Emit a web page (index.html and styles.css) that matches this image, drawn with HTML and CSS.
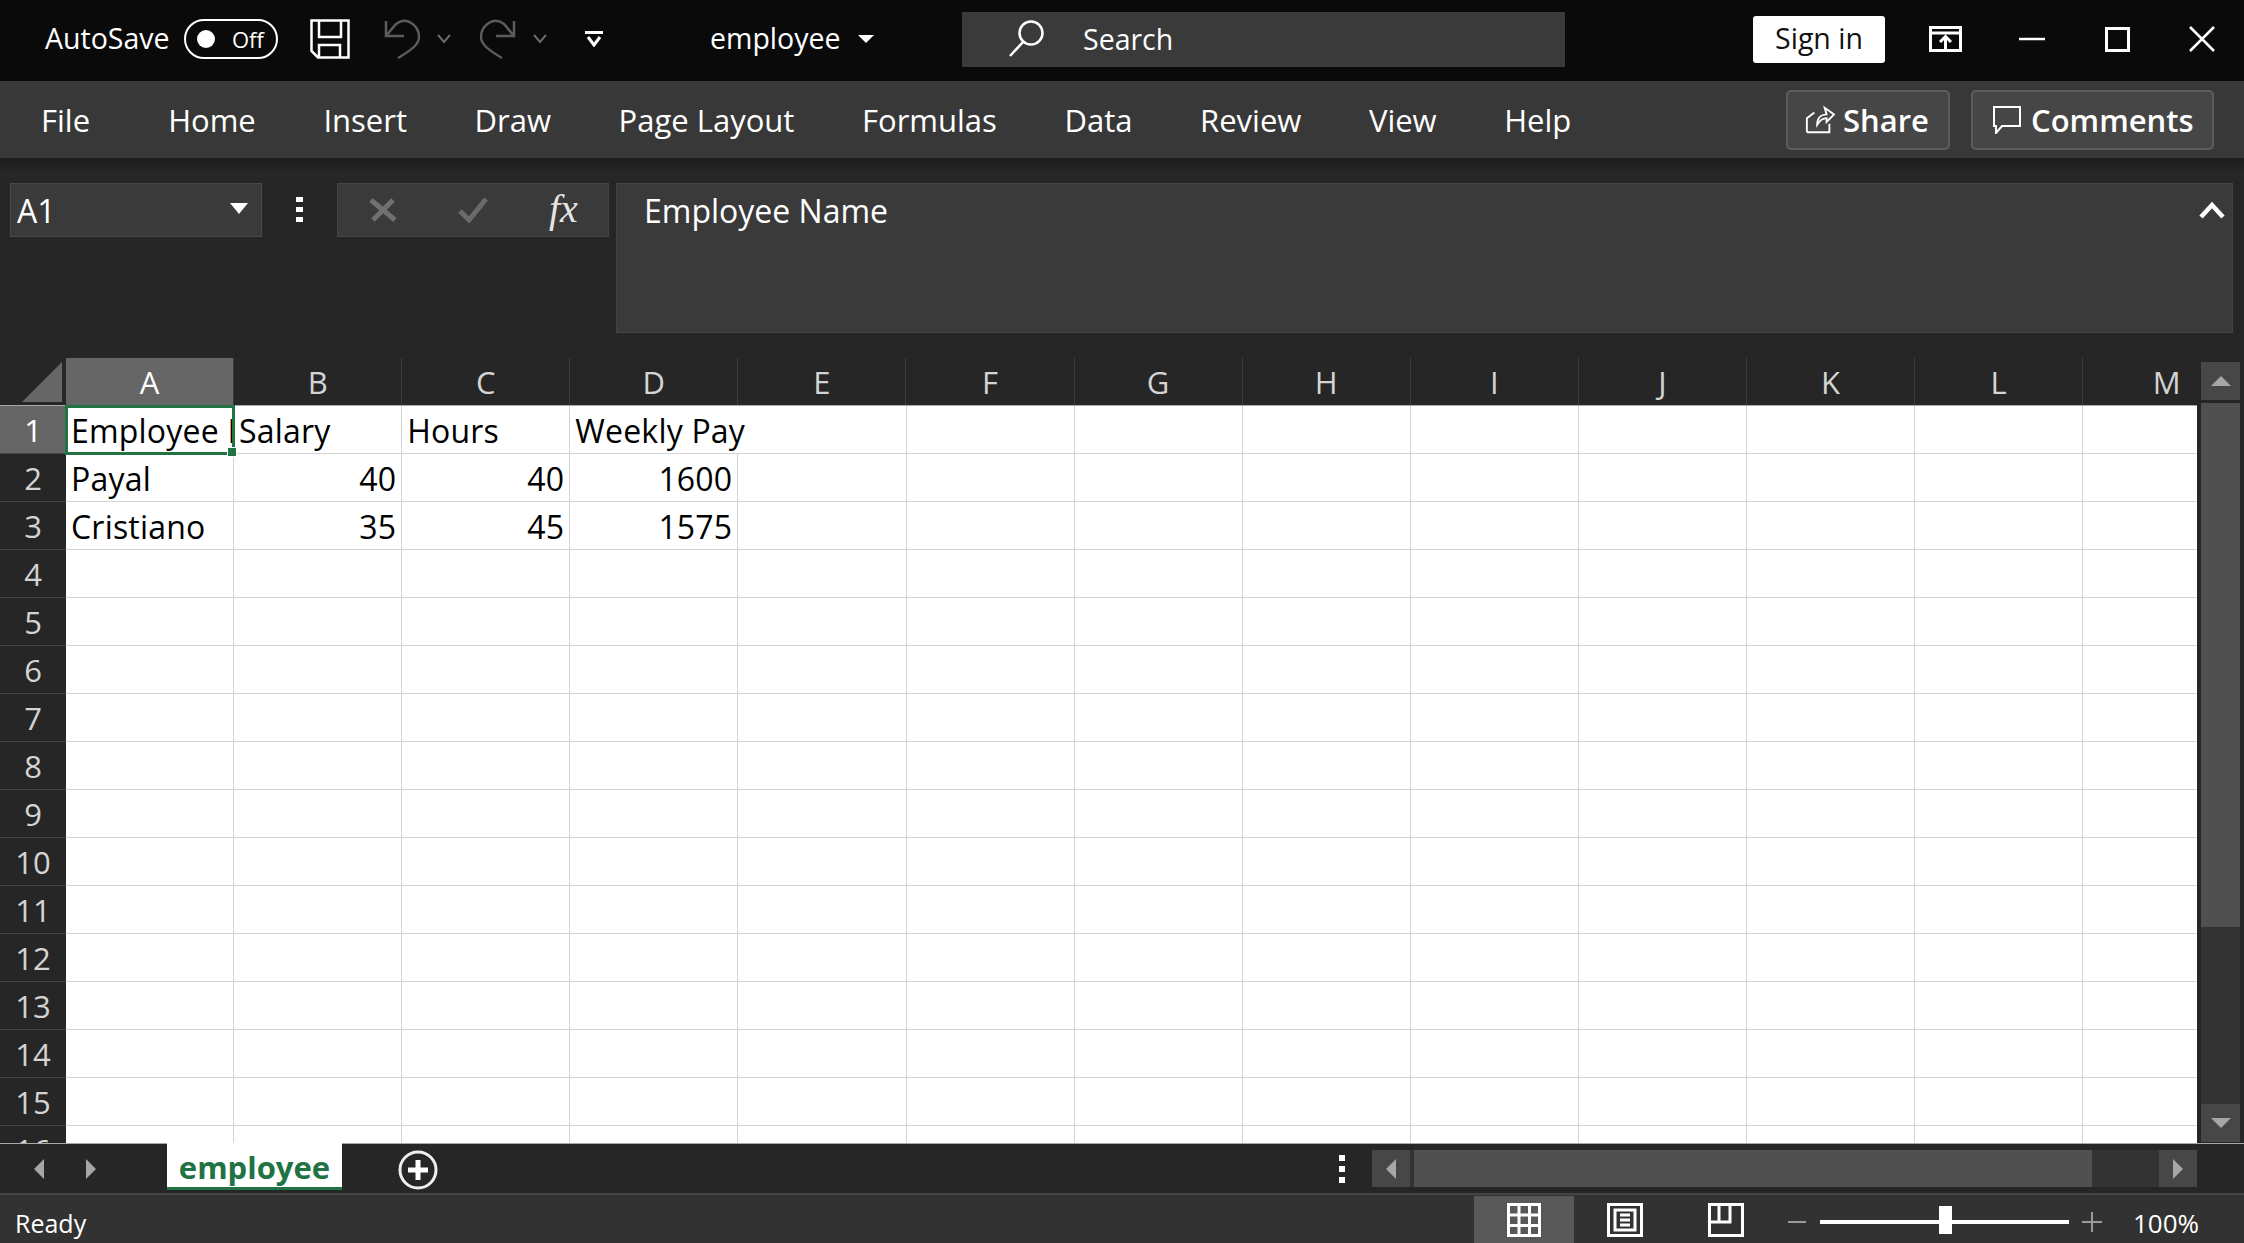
FILE: index.html
```html
<!DOCTYPE html>
<html lang="en">
<head>
  <meta charset="UTF-8" />
  <title>employee - Excel</title>
  <link rel="stylesheet" href="styles.css">
</head>
<body>

  <header class="titlebar">
    <span class="autosave">AutoSave</span>
    <span class="toggle"><i class="toggle-dot"></i><span>Off</span></span>
    <svg class="ico-save" viewBox="0 0 40 40"><path d="M1.5 1.5H38.5V38.5H8L1.5 32Z M9 1.5V18H31V1.5 M9 38.5V26H30V38.5" /></svg>
    <svg class="ico-undo" viewBox="0 0 36 40"><path d="M2 2V17H20 M2 17L12 5C22 -3 35 6 35 18C35 24 31 29 14 39" /></svg>
    <svg class="ico-chev" viewBox="0 0 14 10"><path d="M1 1L7 8L13 1" /></svg>
    <svg class="ico-redo" viewBox="0 0 36 40"><path d="M34 2V17H16 M34 17L24 5C14 -3 1 6 1 18C1 24 5 29 22 39" /></svg>
    <svg class="ico-chev" viewBox="0 0 14 10"><path d="M1 1L7 8L13 1" /></svg>
    <svg class="ico-custom" viewBox="0 0 18 16"><path d="M0 1.5H18 M3 6L9 14L15 6" /></svg>
    <span class="doc-name">employee</span>
    <i class="doc-caret"></i>
    <div class="search">
      <svg class="ico-search" viewBox="0 0 38 38"><circle cx="23" cy="13" r="11.5" /><path d="M15 22L2 36" /></svg>
      <span>Search</span>
    </div>
    <button class="signin">Sign in</button>
    <svg class="ico-restore" viewBox="0 0 33 26"><path d="M1.5 1.5H31.5V24.5H1.5Z M1.5 7H31.5 M16.5 23V11 M11 16L16.5 10.5L22 16" /></svg>
    <svg class="ico-min" viewBox="0 0 26 4"><path d="M0 2H26" /></svg>
    <svg class="ico-max" viewBox="0 0 25 25"><path d="M1.5 1.5H23.5V23.5H1.5Z" /></svg>
    <svg class="ico-close" viewBox="0 0 26 26"><path d="M1 1L25 25 M25 1L1 25" /></svg>
  </header>

  <nav class="ribbon">
    <a href="#" class="tab-file">File</a>
    <a href="#">Home</a>
    <a href="#">Insert</a>
    <a href="#">Draw</a>
    <a href="#">Page Layout</a>
    <a href="#">Formulas</a>
    <a href="#">Data</a>
    <a href="#">Review</a>
    <a href="#">View</a>
    <a href="#">Help</a>
    <button class="ribbon-btn btn-share">
      <svg viewBox="0 0 32 30"><path d="M2 28V13L10 7 M2 28H26V19 M13 20C13 12 18 9 23 9L21 2L31 9L23 17V13C19 13 16 15 13 20Z" /></svg>
      Share
    </button>
    <button class="ribbon-btn btn-comments">
      <svg viewBox="0 0 28 28"><path d="M1 1H27V20H9L3 27V20H1Z" /></svg>
      Comments
    </button>
  </nav>

  <section class="formula-area">
    <div class="name-box"><span>A1</span><i class="name-caret"></i></div>
    <div class="dots"><i></i><i></i><i></i></div>
    <div class="fx-box">
      <svg class="ico-x" viewBox="0 0 30 24"><path d="M3 2L27 22 M25 2L5 22" /></svg>
      <svg class="ico-check" viewBox="0 0 30 26"><path d="M2 14L11 23L28 2" /></svg>
      <span class="fx">fx</span>
    </div>
    <div class="formula-bar">
      <span>Employee Name</span>
      <svg class="ico-collapse" viewBox="0 0 26 18"><path d="M2 16L13 4L24 16" /></svg>
    </div>
  </section>

  <main class="sheet">
    <div class="grid">
      <div class="col-heads">
        <div class="corner"><svg viewBox="0 0 40 40"><path d="M40 0V40H0Z" /></svg></div>
        <div class="col-head active">A</div>
        <div class="col-head">B</div>
        <div class="col-head">C</div>
        <div class="col-head">D</div>
        <div class="col-head">E</div>
        <div class="col-head">F</div>
        <div class="col-head">G</div>
        <div class="col-head">H</div>
        <div class="col-head">I</div>
        <div class="col-head">J</div>
        <div class="col-head">K</div>
        <div class="col-head">L</div>
        <div class="col-head">M</div>
      </div>
      <div class="rows">
        <div class="row">
          <div class="row-head active">1</div>
          <div class="cells">
            <div class="cell clip">Employee Name</div>
            <div class="cell">Salary</div>
            <div class="cell">Hours</div>
            <div class="cell spill">Weekly Pay</div>
          </div>
        </div>
        <div class="row">
          <div class="row-head">2</div>
          <div class="cells">
            <div class="cell">Payal</div>
            <div class="cell num">40</div>
            <div class="cell num">40</div>
            <div class="cell num">1600</div>
          </div>
        </div>
        <div class="row">
          <div class="row-head">3</div>
          <div class="cells">
            <div class="cell">Cristiano</div>
            <div class="cell num">35</div>
            <div class="cell num">45</div>
            <div class="cell num">1575</div>
          </div>
        </div>
        <div class="row"><div class="row-head">4</div><div class="cells"></div></div>
        <div class="row"><div class="row-head">5</div><div class="cells"></div></div>
        <div class="row"><div class="row-head">6</div><div class="cells"></div></div>
        <div class="row"><div class="row-head">7</div><div class="cells"></div></div>
        <div class="row"><div class="row-head">8</div><div class="cells"></div></div>
        <div class="row"><div class="row-head">9</div><div class="cells"></div></div>
        <div class="row"><div class="row-head">10</div><div class="cells"></div></div>
        <div class="row"><div class="row-head">11</div><div class="cells"></div></div>
        <div class="row"><div class="row-head">12</div><div class="cells"></div></div>
        <div class="row"><div class="row-head">13</div><div class="cells"></div></div>
        <div class="row"><div class="row-head">14</div><div class="cells"></div></div>
        <div class="row"><div class="row-head">15</div><div class="cells"></div></div>
        <div class="row"><div class="row-head">16</div><div class="cells"></div></div>
        <div class="selection"><i class="handle"></i></div>
      </div>
    </div>
    <div class="vscroll">
      <div class="sb-btn"><i class="arrow-up"></i></div>
      <div class="vthumb"></div>
      <div class="vtrack"></div>
      <div class="sb-btn"><i class="arrow-down"></i></div>
    </div>
  </main>

  <div class="sheet-tabs">
    <i class="tab-prev"></i>
    <i class="tab-next"></i>
    <div class="sheet-tab">employee</div>
    <svg class="ico-add" viewBox="0 0 40 40"><circle cx="20" cy="20" r="18" /><path d="M20 10V30 M10 20H30" /></svg>
    <div class="dots dots-small"><i></i><i></i><i></i></div>
    <div class="hscroll">
      <div class="sb-btn"><i class="arrow-left"></i></div>
      <div class="hthumb"></div>
      <div class="htrack"></div>
      <div class="sb-btn"><i class="arrow-right"></i></div>
    </div>
  </div>

  <footer class="statusbar">
    <span class="ready">Ready</span>
    <div class="view-btn active">
      <svg viewBox="0 0 34 34"><path d="M1.5 1.5H32.5V32.5H1.5Z M1.5 12H32.5 M1.5 22.5H32.5 M12 1.5V32.5 M22.5 1.5V32.5" /></svg>
    </div>
    <div class="view-btn">
      <svg viewBox="0 0 36 34"><path d="M1.5 1.5H34.5V32.5H1.5Z M8 7H28V27H8Z M13 12H23 M13 17H23 M13 22H23" /></svg>
    </div>
    <div class="view-btn">
      <svg viewBox="0 0 36 34"><path d="M1.5 1.5H34.5V32.5H1.5Z M1.5 19H22V1.5 M11 1.5V19" /></svg>
    </div>
    <div class="zoom-minus"></div>
    <div class="zoom-slider"><i></i></div>
    <svg class="zoom-plus" viewBox="0 0 20 20"><path d="M0 10H20 M10 0V20" /></svg>
    <span class="zoom-value">100%</span>
  </footer>

</body>
</html>
```

FILE: styles.css
```css
* {
  box-sizing: border-box;
}
html, body {
  margin: 0;
  padding: 0;
  height: 1243px;
  overflow: hidden;
}
body {
  font-family: "Open Sans", "Noto Sans", sans-serif;
  background-color: #262626;
  color: #fff;
  display: flex;
  flex-direction: column;
  width: 2244px;
}
svg {
  flex: none;
  fill: none;
  display: block;
}
i {
  display: block;
  flex: none;
}

/* title bar */
.titlebar {
  height: 81px;
  background-color: #0a0a0a;
  display: flex;
  align-items: center;
  padding: 0 0 3px 45px;
  font-size: 28.5px;
  flex: none;
}
.titlebar svg {
  stroke: #fff;
}
.autosave {
  width: 124px;
  white-space: nowrap;
  padding-bottom: 2px;
}
.toggle {
  width: 94px;
  height: 40px;
  margin-left: 15px;
  border: 2px solid #fff;
  border-radius: 20px;
  display: flex;
  align-items: center;
  padding-left: 11px;
  font-size: 22px;
}
.toggle-dot {
  width: 18px;
  height: 18px;
  border-radius: 50%;
  background-color: #fff;
  margin-right: 17px;
}
.ico-save {
  width: 40px;
  height: 40px;
  margin-left: 32px;
  stroke-width: 2.5;
}
.titlebar .ico-undo, .titlebar .ico-redo {
  width: 36px;
  height: 40px;
  stroke: #5c5c5c;
  stroke-width: 2.5;
}
.ico-undo {
  margin-left: 34px;
}
.ico-redo {
  margin-left: 29px;
}
.titlebar .ico-chev {
  width: 14px;
  height: 10px;
  margin-left: 17px;
  stroke: #6a6a6a;
  stroke-width: 2;
}
.ico-custom {
  width: 18px;
  height: 16px;
  margin-left: 38px;
  stroke-width: 3;
}
.doc-name {
  width: 132px;
  margin-left: 107px;
  padding-bottom: 2px;
}
.doc-caret {
  margin-left: 16px;
  border-left: 8px solid transparent;
  border-right: 8px solid transparent;
  border-top: 8px solid #fff;
}
.search {
  width: 603px;
  height: 55px;
  margin-left: 88px;
  background-color: #3a3a3a;
  display: flex;
  align-items: center;
  padding-left: 46px;
}
.ico-search {
  width: 38px;
  height: 38px;
  margin-right: 37px;
  stroke-width: 2.5;
}
.signin {
  width: 132px;
  height: 47px;
  margin-left: 188px;
  border: none;
  border-radius: 3px;
  background-color: #fff;
  color: #111;
  font-family: inherit;
  font-size: 28.5px;
  padding: 0 0 3px;
}
.ico-restore {
  width: 33px;
  height: 26px;
  margin-left: 44px;
  stroke-width: 3;
}
.ico-min {
  width: 26px;
  height: 4px;
  margin-left: 57px;
  stroke-width: 2.5;
}
.ico-max {
  width: 25px;
  height: 25px;
  margin-left: 60px;
  stroke-width: 3;
}
.ico-close {
  width: 26px;
  height: 26px;
  margin-left: 59px;
  stroke-width: 2.5;
}

/* ribbon tabs */
.ribbon {
  height: 77px;
  background-color: #383838;
  display: flex;
  align-items: center;
  padding-left: 41px;
  gap: 67.6px;
  font-size: 31px;
  flex: none;
}
.ribbon a {
  color: #fff;
  text-decoration: none;
  white-space: nowrap;
}
.tab-file {
  margin-right: 10.5px;
}
.ribbon-btn {
  height: 60px;
  background-color: #464646;
  border: 2px solid #5c5c5c;
  border-radius: 5px;
  color: #fff;
  font-family: inherit;
  font-size: 31px;
  font-weight: 600;
  display: flex;
  align-items: center;
  padding: 0;
}
.ribbon-btn svg {
  stroke: #fff;
  stroke-width: 2;
}
.btn-share {
  width: 164px;
  margin-left: auto;
  padding-left: 17px;
  gap: 8px;
}
.btn-share svg {
  width: 30px;
  height: 30px;
}
.btn-comments {
  width: 243px;
  margin-left: -46.6px;
  margin-right: 30px;
  padding-left: 20px;
  gap: 10px;
}
.btn-comments svg {
  width: 28px;
  height: 28px;
}

/* name box and formula bar */
.formula-area {
  height: 200px;
  flex: none;
  display: flex;
  align-items: flex-start;
  padding: 25px 11px 0 10px;
  background: linear-gradient(#1d1d1d, #262626 14px);
  font-size: 32px;
}
.name-box {
  width: 252px;
  height: 54px;
  background-color: #3a3a3a;
  border: 1px solid #484848;
  display: flex;
  align-items: center;
  justify-content: space-between;
  padding: 0 13px 0 6px;
}
.name-caret {
  border-left: 9px solid transparent;
  border-right: 9px solid transparent;
  border-top: 11px solid #fff;
  margin-bottom: 4px;
}
.dots {
  width: 75px;
  height: 53px;
  display: flex;
  flex-direction: column;
  align-items: center;
  justify-content: center;
  gap: 5px;
}
.dots i {
  width: 7px;
  height: 5px;
  background-color: #fff;
}
.fx-box {
  width: 272px;
  height: 54px;
  background-color: #3a3a3a;
  border: 1px solid #444;
  display: flex;
  align-items: center;
  padding-left: 30px;
}
.ico-x {
  width: 30px;
  height: 24px;
  stroke: #707070;
  stroke-width: 5;
}
.ico-check {
  width: 30px;
  height: 26px;
  margin-left: 60px;
  stroke: #6a6a6a;
  stroke-width: 5;
}
.fx {
  margin-left: 61px;
  padding-bottom: 3px;
  font-family: "Liberation Serif", serif;
  font-style: italic;
  font-size: 40px;
  color: #e4e4e4;
  line-height: 1;
}
.formula-bar {
  width: 1617px;
  height: 150px;
  margin-left: 7px;
  background-color: #3a3a3a;
  border: 1px solid #444;
  display: flex;
  align-items: flex-start;
  justify-content: space-between;
  padding: 5px 7px 0 27px;
}
.ico-collapse {
  width: 26px;
  height: 18px;
  margin-top: 12px;
  stroke: #fff;
  stroke-width: 4.5;
}

/* worksheet */
.sheet {
  height: 785px;
  flex: none;
  display: flex;
}
.grid {
  width: 2197px;
  overflow: hidden;
  font-size: 32px;
}
.col-heads {
  height: 48px;
  display: flex;
  border-bottom: 1px solid #a8a8a8;
}
.corner {
  width: 66px;
  flex: none;
  padding: 4px 0 0 22px;
}
.corner svg {
  width: 40px;
  height: 40px;
  fill: #666;
}
.col-head {
  width: 168.1px;
  flex: none;
  color: #d4d4d4;
  text-align: center;
  line-height: 48px;
  font-size: 31px;
  border-right: 1px solid #3c3c3c;
}
.col-head.active {
  background-color: #666;
  color: #fff;
}
.rows {
  position: relative;
}
.row {
  height: 48px;
  display: flex;
}
.row-head {
  width: 66px;
  flex: none;
  color: #d4d4d4;
  text-align: center;
  line-height: 48px;
  font-size: 31px;
  border-bottom: 1px solid #444;
}
.row-head.active {
  background-color: #666;
  color: #fff;
}
.cells {
  flex: 1;
  display: flex;
  background-color: #fff;
  background-image: repeating-linear-gradient(90deg, transparent 0 167.1px, #d4d4d4 167.1px 168.1px);
  border-bottom: 1px solid #d4d4d4;
}
.cell {
  width: 168.1px;
  flex: none;
  color: #000;
  line-height: 49px;
  letter-spacing: 0.2px;
  padding: 0 5px;
  white-space: nowrap;
}
.cell.clip {
  overflow: hidden;
}
.cell.num {
  text-align: right;
  padding-right: 6px;
}
.cell.spill {
  width: 169.1px;
  height: 47px;
  background-color: #fff;
}
.selection {
  position: absolute;
  left: 65px;
  top: -1px;
  width: 170px;
  height: 50px;
  border: 3px solid #217346;
}
.handle {
  position: absolute;
  right: -5px;
  bottom: -5px;
  width: 10px;
  height: 10px;
  background-color: #217346;
  border: 1px solid #fff;
}

/* scroll bars */
.vscroll {
  width: 47px;
  flex: none;
  display: flex;
  flex-direction: column;
  padding: 4px 4px 1px;
}
.sb-btn {
  background-color: #474747;
  display: flex;
  align-items: center;
  justify-content: center;
  flex: none;
}
.vscroll .sb-btn {
  height: 38px;
}
.vthumb {
  height: 524px;
  margin-top: 3px;
  background-color: #505050;
  flex: none;
}
.vtrack {
  flex: 1;
  background-color: #333;
}
.arrow-up {
  border-left: 10px solid transparent;
  border-right: 10px solid transparent;
  border-bottom: 10px solid #a6a6a6;
}
.arrow-down {
  border-left: 10px solid transparent;
  border-right: 10px solid transparent;
  border-top: 10px solid #a6a6a6;
}
.arrow-left {
  border-top: 10px solid transparent;
  border-bottom: 10px solid transparent;
  border-right: 10px solid #a6a6a6;
}
.arrow-right {
  border-top: 10px solid transparent;
  border-bottom: 10px solid transparent;
  border-left: 10px solid #a6a6a6;
}

/* sheet tabs */
.sheet-tabs {
  height: 52px;
  flex: none;
  display: flex;
  align-items: flex-start;
  border-top: 1px solid #a8a8a8;
  border-bottom: 2px solid #454545;
  position: relative;
}
.tab-prev {
  margin: 15px 0 0 34px;
  border-top: 10px solid transparent;
  border-bottom: 10px solid transparent;
  border-right: 10px solid #a6a6a6;
}
.tab-next {
  margin: 15px 0 0 42px;
  border-top: 10px solid transparent;
  border-bottom: 10px solid transparent;
  border-left: 10px solid #a6a6a6;
}
.sheet-tab {
  width: 175px;
  height: 47px;
  margin: -1px 0 0 71px;
  background-color: #fff;
  border-bottom: 3px solid #217346;
  color: #217346;
  font-size: 31px;
  font-weight: 700;
  text-align: center;
  line-height: 48px;
}
.ico-add {
  width: 40px;
  height: 40px;
  margin: 6px 0 0 56px;
  stroke: #eee;
  stroke-width: 3;
}
.ico-add path {
  stroke: #fff;
  stroke-width: 5;
}
.dots-small {
  width: 14px;
  height: 40px;
  margin: 5px 0 0 897px;
  gap: 5px;
}
.dots-small i {
  width: 6px;
  height: 6px;
}
.hscroll {
  width: 825px;
  height: 37px;
  margin: 6px 0 0 23px;
  display: flex;
  background-color: #333;
}
.hscroll .sb-btn {
  width: 38px;
}
.hthumb {
  width: 678px;
  margin-left: 4px;
  background-color: #505050;
  flex: none;
}
.htrack {
  flex: 1;
}

/* status bar */
.statusbar {
  height: 48px;
  flex: none;
  background-color: #333232;
  display: flex;
  align-items: center;
  font-size: 26px;
}
.ready {
  margin-left: 15px;
  width: 1459px;
  font-size: 25px;
  padding-top: 7px;
}
.view-btn {
  width: 100px;
  height: 47px;
  margin-top: 1px;
  display: flex;
  align-items: center;
  justify-content: center;
  margin-right: 1px;
}
.view-btn.active {
  background-color: #585858;
}
.view-btn svg {
  width: 36px;
  height: 34px;
  stroke: #fff;
  stroke-width: 3;
}
.zoom-minus {
  width: 18px;
  height: 2px;
  margin: 6px 0 0 11px;
  background-color: #9a9a9a;
}
.zoom-slider {
  width: 249px;
  height: 4px;
  margin: 6px 0 0 14px;
  background-color: #fff;
  position: relative;
}
.zoom-slider i {
  position: absolute;
  left: 119px;
  top: -14px;
  width: 13px;
  height: 28px;
  background-color: #fff;
}
.zoom-plus {
  width: 20px;
  height: 20px;
  margin: 6px 0 0 13px;
  stroke: #9a9a9a;
  stroke-width: 2;
}
.zoom-value {
  margin-left: 31px;
  padding-top: 7px;
  white-space: nowrap;
}
```
